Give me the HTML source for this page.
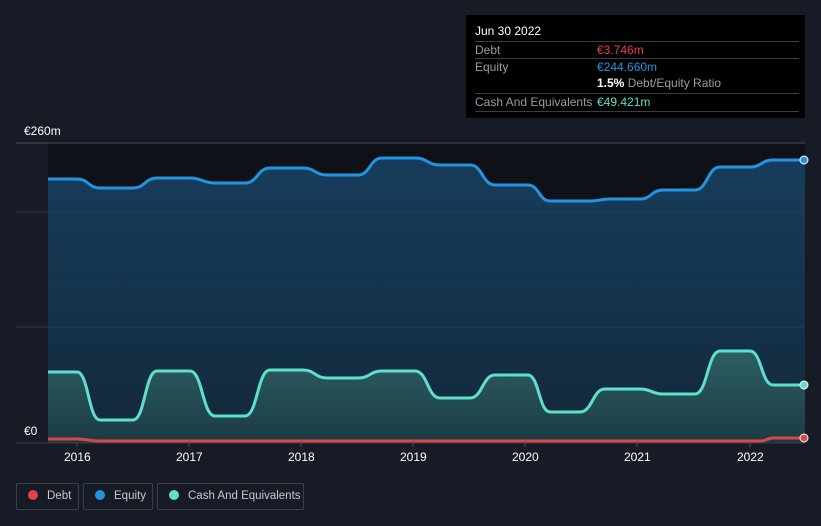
<!DOCTYPE html><html><head><style>
body{margin:0;width:821px;height:526px;background:#161b25;font-family:"Liberation Sans",sans-serif;overflow:hidden;position:relative}
.t{position:absolute;color:#fff;font-size:12px}
.tip{position:absolute;left:466px;top:15px;width:339px;height:103px;background:#000}
.row{position:absolute;left:9px;width:324px;border-top:1px solid #3a3d42;font-size:12px;color:#9a9ca0;white-space:nowrap}
.lg{position:absolute;top:483px;height:27px;border:1px solid #3b3f47;border-radius:2px;color:#c8cacd;font-size:11.5px;line-height:25px;box-sizing:border-box;white-space:nowrap;overflow:hidden}
.lg i{display:inline-block;width:10px;height:10px;border-radius:50%;margin:0 9px 0 11px;vertical-align:-1px}
</style></head><body>
<svg width="821" height="526" style="position:absolute;left:0;top:0">
<defs>
<linearGradient id="eq" x1="0" y1="0" x2="0" y2="1"><stop offset="0" stop-color="#173d5c"/><stop offset="1" stop-color="#13283a"/></linearGradient>
<linearGradient id="ca" x1="0" y1="0" x2="0" y2="1"><stop offset="0" stop-color="#2c5f62"/><stop offset="1" stop-color="#1c3a44"/></linearGradient>
</defs>
<rect x="48" y="143" width="757" height="300" fill="#0e1118"/>
<line x1="16" y1="143" x2="805" y2="143" stroke="#4a4d52"/>
<path d="M48 179 L77 179 C88.5 179 88.5 188 100 188 L133 188 C145 188 145 178 157 178 L190 178 C202.5 178 202.5 183 215 183 L245 183 C257.5 183 257.5 168 270 168 L303 168 C315 168 315 175 327 175 L358 175 C370 175 370 158 382 158 L415 158 C427.5 158 427.5 165 440 165 L470 165 C482.5 165 482.5 185 495 185 L528 185 C539 185 539 201 550 201 L590 201 C600 201 600 199 610 199 L640 199 C651.5 199 651.5 190 663 190 L695 190 C707.5 190 707.5 167 720 167 L750 167 C761.5 167 761.5 160 773 160 L805 160 L805 443 L48 443Z" fill="url(#eq)"/>
<line x1="16" y1="212" x2="805" y2="212" stroke="#2a3a4a" stroke-width="1"/>
<line x1="16" y1="327" x2="805" y2="327" stroke="#2a3a4a" stroke-width="1"/>
<path d="M48 372 L77 372 C88.5 372 88.5 420 100 420 L133 420 C145 420 145 371 157 371 L190 371 C202.5 371 202.5 416 215 416 L245 416 C257.5 416 257.5 370 270 370 L303 370 C315 370 315 378 327 378 L358 378 C370 378 370 371 382 371 L415 371 C427.5 371 427.5 398 440 398 L470 398 C482.5 398 482.5 375 495 375 L528 375 C539 375 539 412 550 412 L580 412 C592.5 412 592.5 389 605 389 L640 389 C651.5 389 651.5 394 663 394 L695 394 C707.5 394 707.5 351 720 351 L750 351 C761.5 351 761.5 385 773 385 L805 385 L805 443 L48 443Z" fill="url(#ca)"/>
<path d="M48 179 L77 179 C88.5 179 88.5 188 100 188 L133 188 C145 188 145 178 157 178 L190 178 C202.5 178 202.5 183 215 183 L245 183 C257.5 183 257.5 168 270 168 L303 168 C315 168 315 175 327 175 L358 175 C370 175 370 158 382 158 L415 158 C427.5 158 427.5 165 440 165 L470 165 C482.5 165 482.5 185 495 185 L528 185 C539 185 539 201 550 201 L590 201 C600 201 600 199 610 199 L640 199 C651.5 199 651.5 190 663 190 L695 190 C707.5 190 707.5 167 720 167 L750 167 C761.5 167 761.5 160 773 160 L805 160" fill="none" stroke="#2394e0" stroke-width="3"/>
<path d="M48 372 L77 372 C88.5 372 88.5 420 100 420 L133 420 C145 420 145 371 157 371 L190 371 C202.5 371 202.5 416 215 416 L245 416 C257.5 416 257.5 370 270 370 L303 370 C315 370 315 378 327 378 L358 378 C370 378 370 371 382 371 L415 371 C427.5 371 427.5 398 440 398 L470 398 C482.5 398 482.5 375 495 375 L528 375 C539 375 539 412 550 412 L580 412 C592.5 412 592.5 389 605 389 L640 389 C651.5 389 651.5 394 663 394 L695 394 C707.5 394 707.5 351 720 351 L750 351 C761.5 351 761.5 385 773 385 L805 385" fill="none" stroke="#5de0cc" stroke-width="3"/>
<path d="M48 439 L77 439 C88 439 88 441 100 441 L760 441 C767 441 767 438 773 438 L805 438" fill="none" stroke="#d9474c" stroke-width="3"/>
<line x1="16" y1="443" x2="805" y2="443" stroke="#3a3e45"/>
<g stroke="#4a4d52"><line x1="77" y1="443" x2="77" y2="447"/><line x1="189" y1="443" x2="189" y2="447"/><line x1="301" y1="443" x2="301" y2="447"/><line x1="413" y1="443" x2="413" y2="447"/><line x1="525" y1="443" x2="525" y2="447"/><line x1="637" y1="443" x2="637" y2="447"/><line x1="750" y1="443" x2="750" y2="447"/></g>
<circle cx="804" cy="160" r="4" fill="#2394e0" stroke="#fff" stroke-width="1"/>
<circle cx="804" cy="385" r="4" fill="#5de0cc" stroke="#fff" stroke-width="1"/>
<circle cx="804" cy="438" r="4" fill="#e0474c" stroke="#fff" stroke-width="1"/>
</svg>
<div class="t" style="left:24px;top:124px">€260m</div>
<div class="t" style="left:24px;top:424px">€0</div>
<div class="t" style="left:64px;top:450px">2016</div>
<div class="t" style="left:176px;top:450px">2017</div>
<div class="t" style="left:288px;top:450px">2018</div>
<div class="t" style="left:400px;top:450px">2019</div>
<div class="t" style="left:512px;top:450px">2020</div>
<div class="t" style="left:624px;top:450px">2021</div>
<div class="t" style="left:737px;top:450px">2022</div>
<div class="tip">
<div style="position:absolute;left:9px;top:9px;color:#fff;font-size:12px">Jun 30 2022</div>
<div class="row" style="top:26px;height:17px;line-height:16px">Debt<span style="position:absolute;left:122px;color:#e6404a">€3.746m</span></div>
<div class="row" style="top:43px;height:17px;line-height:16px">Equity<span style="position:absolute;left:122px;color:#2394e0">€244.660m</span></div>
<div style="position:absolute;left:131px;top:61px;font-size:12px;color:#9a9ca0;white-space:nowrap"><b style="color:#fff">1.5%</b> Debt/Equity Ratio</div>
<div class="row" style="top:78px;height:17px;line-height:16px;border-bottom:1px solid #3a3d42">Cash And Equivalents<span style="position:absolute;left:122px;color:#5de0cc">€49.421m</span></div>
</div>
<div class="lg" style="left:16px;width:63px"><i style="background:#e6404a"></i>Debt</div>
<div class="lg" style="left:83px;width:70px"><i style="background:#2394e0"></i>Equity</div>
<div class="lg" style="left:157px;width:147px"><i style="background:#5de0cc"></i>Cash And Equivalents</div>
</body></html>
